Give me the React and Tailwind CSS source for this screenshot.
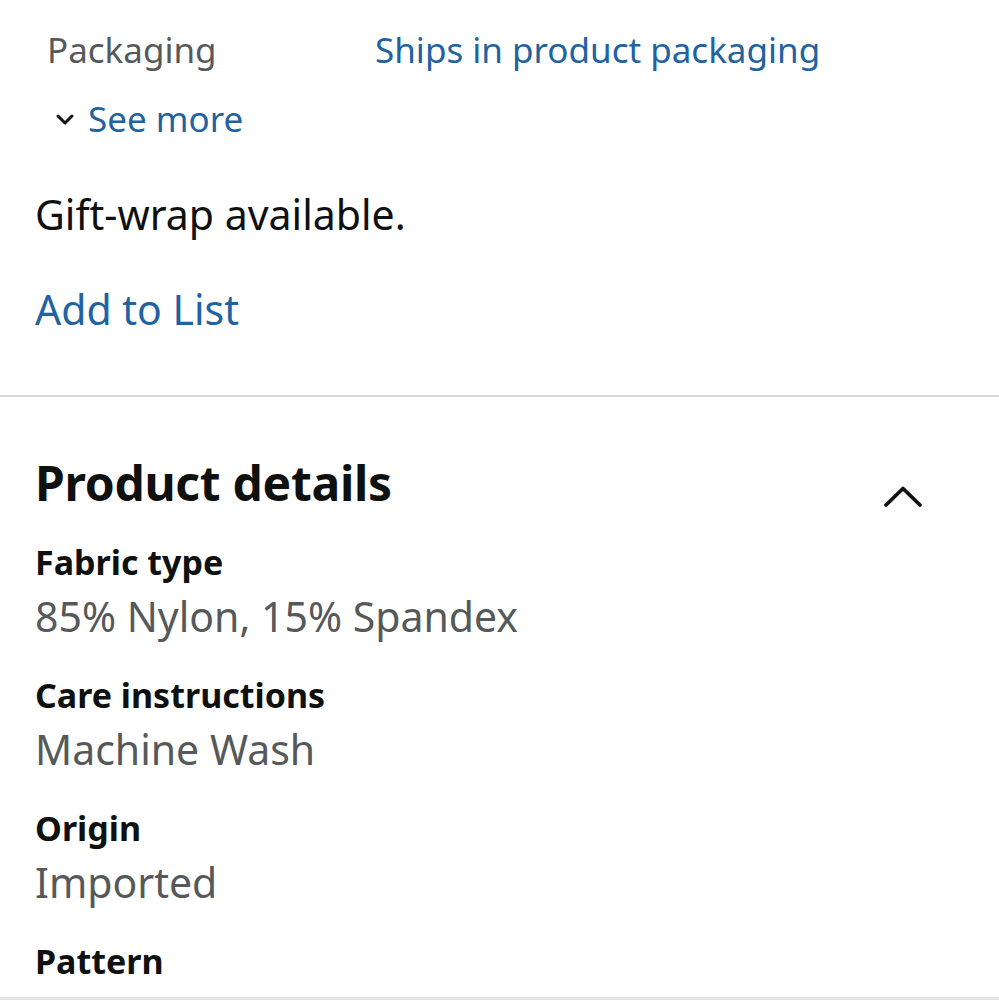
export default function App() {
  const font = { fontFamily: '"Noto Sans", "Liberation Sans", sans-serif' };
  const rows = [
    ["Fabric type", "85% Nylon, 15% Spandex"],
    ["Care instructions", "Machine Wash"],
    ["Origin", "Imported"],
    ["Pattern", "Solid"],
  ];
  return (
    <div className="w-[999px] h-[1000px] overflow-hidden bg-white relative" style={font}>
      <div className="flex items-start pt-[29px]">
        <div className="pl-[47px] w-[375px] text-[35px] leading-[42px] text-[#565959]">Packaging</div>
        <div className="text-[35px] leading-[42px] text-[#2162a1]">Ships in product packaging</div>
      </div>
      <div className="flex items-center mt-[27px] pl-[55px] h-[42px]">
        <svg width="20" height="14" viewBox="0 0 20 14" className="mr-[13px] mt-[2px]">
          <path d="M3 3 L10 10 L17 3" fill="none" stroke="#111" strokeWidth="3" strokeLinecap="round" strokeLinejoin="round" />
        </svg>
        <span className="text-[35px] leading-[42px] text-[#2162a1]">See more</span>
      </div>
      <div className="pl-[35px] mt-[49px] text-[41px] leading-[50px] text-[#0f1111]">Gift-wrap available.</div>
      <div className="pl-[35px] mt-[45px] text-[41px] leading-[50px] text-[#2162a1]">Add to List</div>
      <div className="mt-[61px] h-[2px] bg-[#d5d9d9]" />
      <div className="flex items-start justify-between pl-[35px] pr-[76px] mt-[58px]">
        <div className="text-[48px] leading-[56px] font-bold text-[#0f1111] tracking-[-0.3px]">Product details</div>
        <svg width="40" height="24" viewBox="0 0 40 24" className="mt-[30px]">
          <path d="M3 20 L20 3.5 L37 20" fill="none" stroke="#111" strokeWidth="3.8" strokeLinecap="round" strokeLinejoin="round" />
        </svg>
      </div>
      <div className="pl-[35px] mt-[31px] flex flex-col gap-[34px]">
        {rows.map(([k, v]) => (
          <div key={k} className="flex flex-col">
            <div className="text-[34px] leading-[40px] font-bold text-[#0f1111]">{k}</div>
            <div className="text-[41px] leading-[50px] text-[#565959] mt-[9px]">{v}</div>
          </div>
        ))}
      </div>
      <div className="absolute left-0 right-0 bottom-0 h-[3px] bg-[#e3e6e6]" />
    </div>
  );
}
